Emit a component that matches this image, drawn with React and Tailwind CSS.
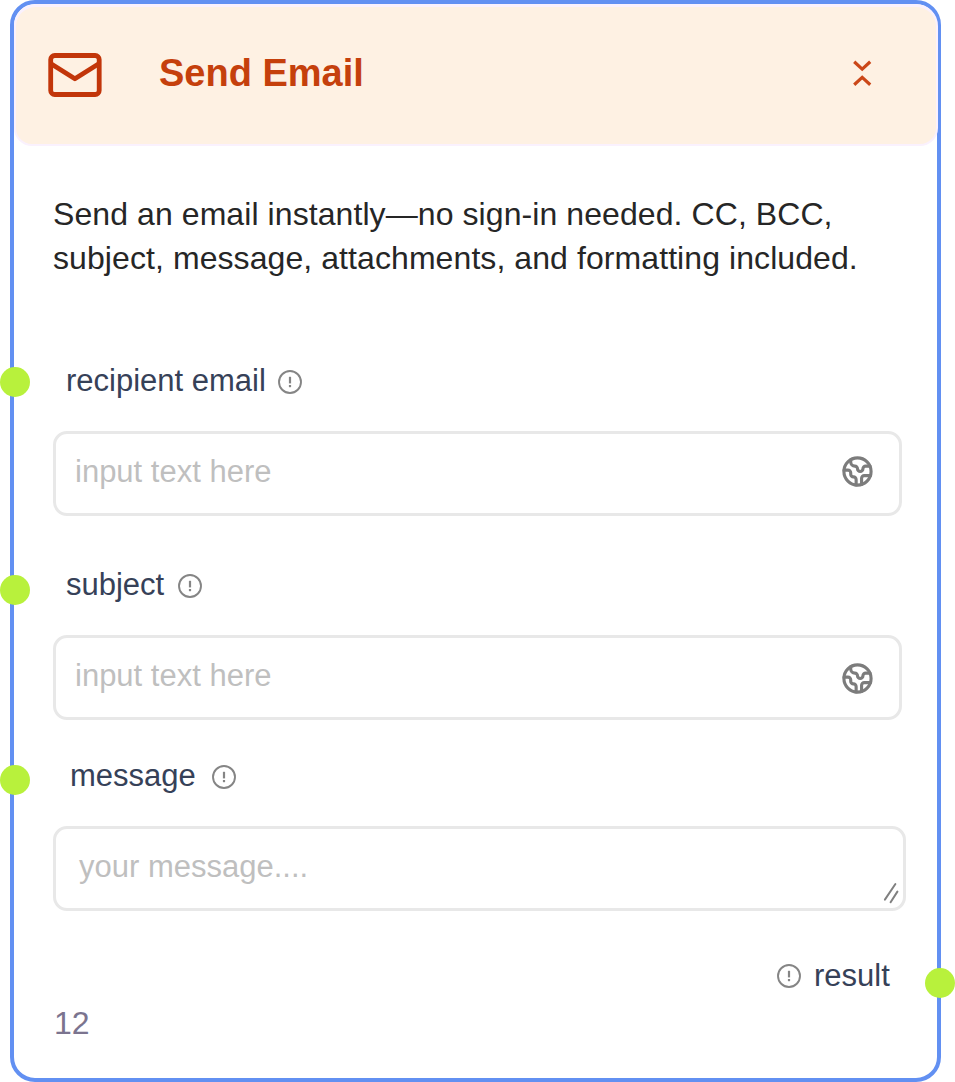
import React from "react";

function InfoIcon({ className = "" }) {
  return (
    <svg className={`h-[24px] w-[24px] shrink-0 ${className}`} viewBox="0 0 24 24" fill="none" stroke="#858585">
      <circle cx="12" cy="12" r="11" strokeWidth="1.9" />
      <path d="M12 6.8v6.6" strokeWidth="2.2" />
      <path d="M12 15v2.2" strokeWidth="2.2" />
    </svg>
  );
}

function EarthIcon({ className = "" }) {
  return (
    <svg
      className={`h-[33px] w-[33px] shrink-0 ${className}`}
      viewBox="-0.15 -0.15 24.3 24.3"
      fill="none"
      stroke="#7c7c7c"
      strokeWidth="2.3"
      strokeLinecap="round"
      strokeLinejoin="round"
    >
      <path d="M21.54 15H17a2 2 0 0 0-2 2v4.54" />
      <path d="M7 3.34V5a3 3 0 0 0 3 3a2 2 0 0 1 2 2c0 1.1.9 2 2 2a2 2 0 0 0 2-2c0-1.1.9-2 2-2h3.17" />
      <path d="M11 21.95V18a2 2 0 0 0-2-2a2 2 0 0 1-2-2v-1a2 2 0 0 0-2-2H2.05" />
      <circle cx="12" cy="12" r="10" />
    </svg>
  );
}

function MailIcon() {
  return (
    <svg
      className="h-[46px] w-[56px] shrink-0"
      viewBox="0 0 56 46"
      fill="none"
      stroke="#c2360a"
      strokeWidth="4.8"
      strokeLinejoin="round"
    >
      <rect x="3.7" y="3.5" width="48.5" height="39" rx="4" />
      <path d="M4 11.8 27.9 26.8 51.8 11.8" />
    </svg>
  );
}

function CollapseIcon() {
  return (
    <svg className="h-[28px] w-[20px] shrink-0" viewBox="0 0 20 28" fill="none" stroke="#cb4718" strokeWidth="3.2">
      <path d="M2.2 2.8 10.2 10.1l8-7.3" />
      <path d="M2.2 25.7 10.2 18.4l8 7.3" />
    </svg>
  );
}

function Handle({ className }) {
  return <span className={`absolute h-[30px] w-[30px] rounded-full bg-[#b8f13c] ${className}`} />;
}

const label = "whitespace-nowrap text-[31px] leading-[36px] text-[#364158]";
const box = "flex h-[85px] rounded-[14px] border-[3px] border-[#e8e8e8] bg-white";
const hint = "whitespace-nowrap text-[31px] leading-[36px] text-[#bfbfbf]";

export default function App() {
  return (
    <main className="relative h-[1082px] w-[955px] overflow-hidden bg-white pl-[10px] font-['Liberation_Sans',Arial,sans-serif]">
      <section className="flex h-[1082px] w-[931px] flex-col rounded-[25px] border-4 border-[#6290f2] bg-white">
        <header className="-mr-px flex h-[142px] shrink-0 items-start rounded-t-[22px] rounded-b-[18px] border-x-2 border-t-[3px] border-b-2 border-[#faf1fd] bg-[#fef1e3] pl-[31px]">
          <div className="pt-[45px]">
            <MailIcon />
          </div>
          <h1 className="ml-[56px] mt-[43px] whitespace-nowrap text-[38px] font-bold leading-[46px] text-[#c5400c]">
            Send Email
          </h1>
          <div className="ml-auto mr-[64px] mt-[52px]">
            <CollapseIcon />
          </div>
        </header>

        <div className="flex flex-col pl-[39px]">
          <p className="mt-[46px] whitespace-nowrap text-[32px] leading-[44px] tracking-[0.08px] text-[#262626]">
            Send an email instantly—no sign-in needed. CC, BCC,
            <br />
            subject, message, attachments, and formatting included.
          </p>

          <div className="mt-[83px] flex h-[36px] items-center pl-[13px]">
            <span className={label}>recipient email</span>
            <InfoIcon className="ml-[12px] mt-[1px]" />
          </div>
          <div className={`${box} mt-[32px] w-[849px] items-start justify-between pl-[19px] pr-[25px]`}>
            <span className={`${hint} mt-[20px]`}>input text here</span>
            <EarthIcon className="mt-[21px]" />
          </div>

          <div className="mt-[51px] flex h-[36px] items-center pl-[13px]">
            <span className={label}>subject</span>
            <InfoIcon className="ml-[14px] mt-[1px]" />
          </div>
          <div className={`${box} mt-[32px] w-[849px] items-start justify-between pl-[19px] pr-[25px]`}>
            <span className={`${hint} mt-[20px]`}>input text here</span>
            <EarthIcon className="mt-[24px]" />
          </div>

          <div className="mt-[38px] flex h-[36px] items-center pl-[17px]">
            <span className={label}>message</span>
            <InfoIcon className="ml-[16px] mt-[2px]" />
          </div>
          <div className={`${box} mt-[32px] w-[853px] items-start justify-between pl-[23px] pr-[4px]`}>
            <span className={`${hint} mt-[20px]`}>your message....</span>
            <svg className="mt-[53px] h-[22px] w-[16px]" viewBox="0 0 16 22" fill="none" stroke="#808080" strokeWidth="2" strokeLinecap="round">
              <path d="M1.9 17.6 12.4 2M7.6 20.2 14.4 9.6" />
            </svg>
          </div>

          <div className="mt-[47px] flex h-[36px] items-center pl-[724px]">
            <InfoIcon />
            <span className={`${label} ml-[13px]`}>result</span>
          </div>
          <span className="ml-px mt-[10px] text-[32px] leading-[38px] text-[#7b748f]">12</span>
        </div>
      </section>

      <Handle className="left-0 top-[367px]" />
      <Handle className="left-0 top-[575px]" />
      <Handle className="left-0 top-[765px]" />
      <Handle className="left-[925px] top-[968px]" />
    </main>
  );
}
